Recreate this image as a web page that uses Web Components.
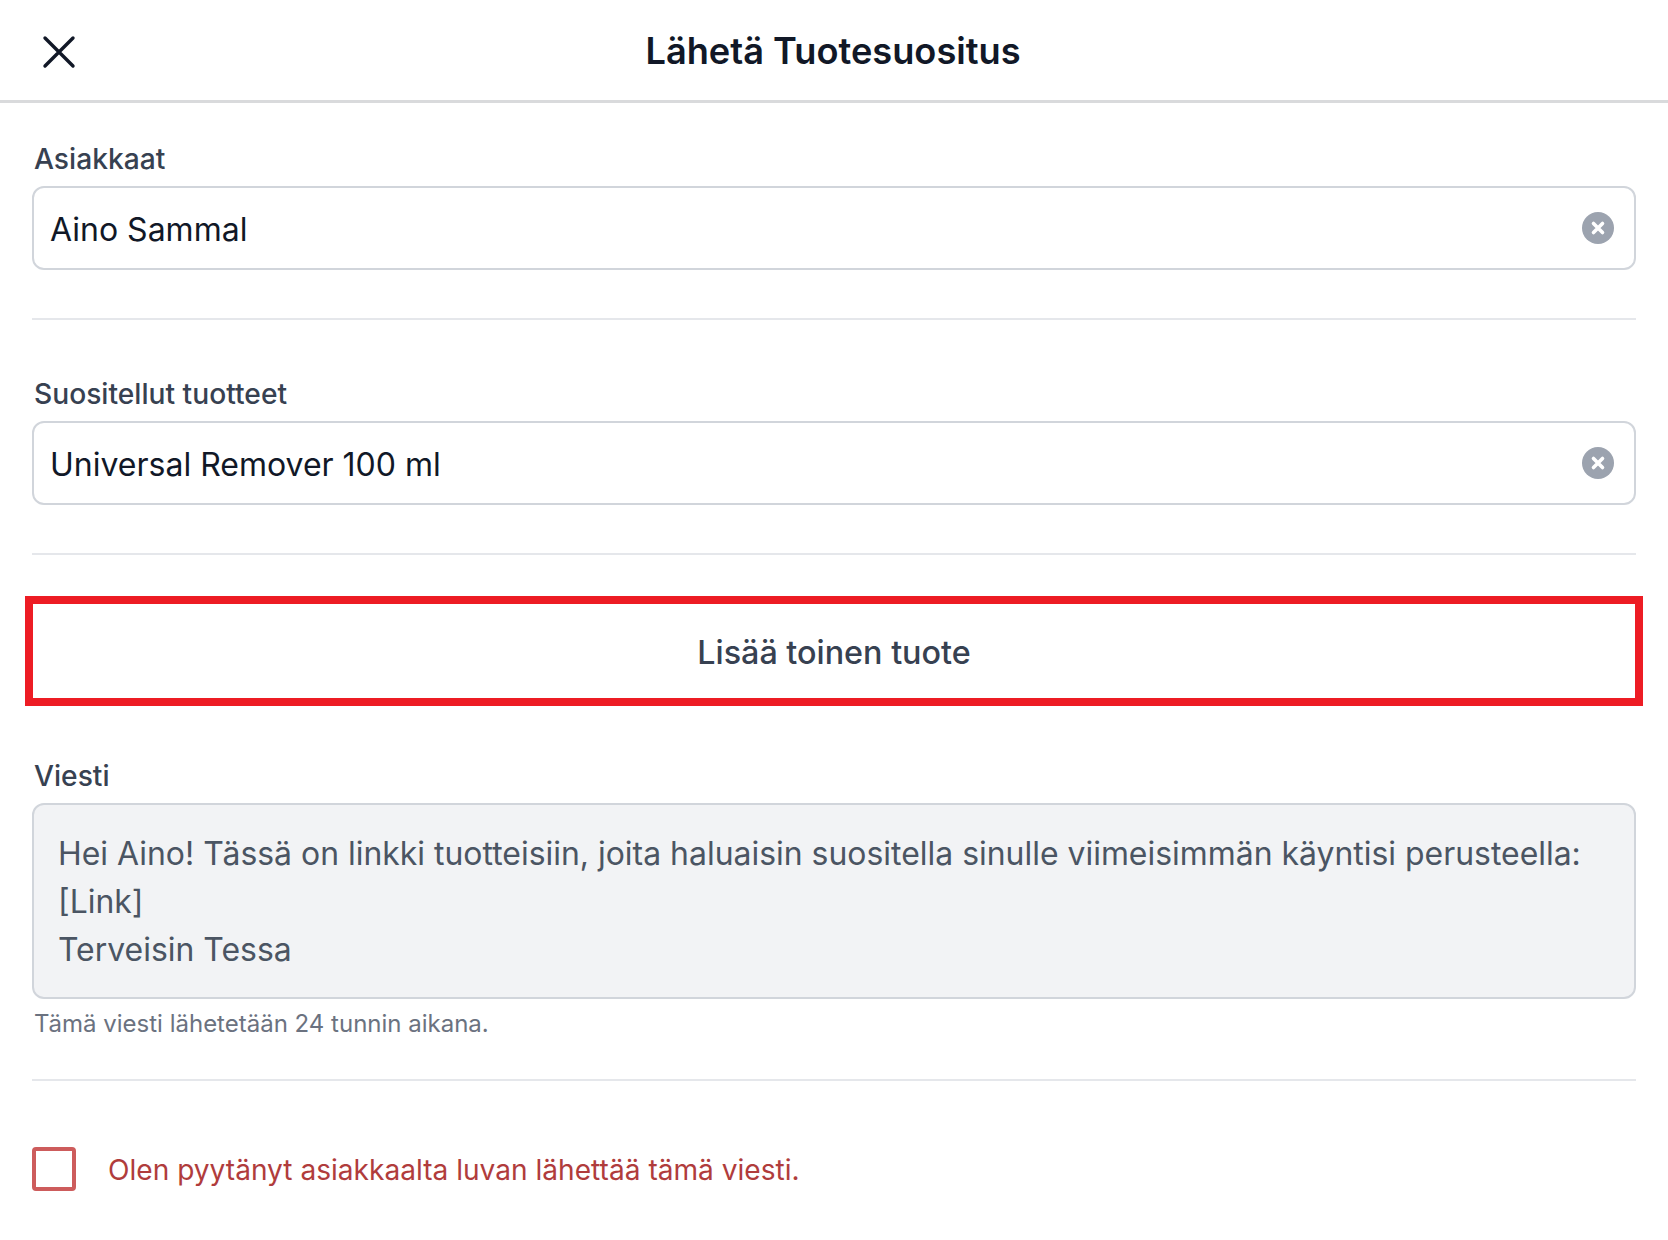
<!DOCTYPE html>
<html lang="fi">
<head>
<meta charset="utf-8">
<title>Lähetä Tuotesuositus</title>
<style>
  html, body { margin: 0; background: #fff; }
  body { font-family: Inter, "Liberation Sans", sans-serif; }
</style>
</head>
<body>
<recommend-form>
  <modal-header slot="header">Lähetä Tuotesuositus</modal-header>
  <form-field label="Asiakkaat">Aino Sammal</form-field>
  <form-field spaced label="Suositellut tuotteet">Universal Remover 100 ml</form-field>
  <add-button>Lisää toinen tuote</add-button>
  <message-field label="Viesti" hint="Tämä viesti lähetetään 24 tunnin aikana.">
    Hei Aino! Tässä on linkki tuotteisiin, joita haluaisin suositella sinulle viimeisimmän käyntisi perusteella:<br>[Link]<br>Terveisin Tessa
  </message-field>
  <consent-check>Olen pyytänyt asiakkaalta luvan lähettää tämä viesti.</consent-check>
</recommend-form>

<script>
customElements.define("recommend-form", class extends HTMLElement {
  connectedCallback() {
    this.attachShadow({mode: 'open'});
    this.shadowRoot.innerHTML = `
      <style>
        :host { display: block; height: 1240px; overflow: hidden; background: #fff; }
        .body { display: flex; flex-direction: column; padding: 0 32px; }
      </style>
      <slot name="header"></slot>
      <div class="body"><slot></slot></div>
    `;
  }
});

customElements.define("modal-header", class extends HTMLElement {
  connectedCallback() {
    this.attachShadow({mode: 'open'});
    this.shadowRoot.innerHTML = `
      <style>
        :host { display: block; }
        .bar {
          display: flex; align-items: center; justify-content: center;
          position: relative;
          height: 100px; border-bottom: 3px solid #d9dadc;
        }
        .title { font-size: 36.2px; font-weight: 600; color: #111827; margin-top: 2px; margin-right: 2px; }
        svg { position: absolute; left: 42px; top: 35px; width: 34px; height: 34px; }
      </style>
      <div class="bar">
        <svg viewBox="0 0 34 34" fill="none" stroke="#111827" stroke-width="3.4" stroke-linecap="round">
          <path d="M3 3 L31 31 M31 3 L3 31"/>
        </svg>
        <span class="title"><slot></slot></span>
      </div>
    `;
  }
});

customElements.define("form-field", class extends HTMLElement {
  connectedCallback() {
    this.attachShadow({mode: 'open'});
    this.shadowRoot.innerHTML = `
      <style>
        :host { display: block; padding-top: 39px; border-bottom: 2px solid #e5e7eb; padding-bottom: 48px; }
        :host([spaced]) { padding-top: 57px; }
        label { display: block; padding-left: 2px; font-size: 28.2px; line-height: 34px; font-weight: 500; color: #374151; margin-bottom: 10px; }
        .box {
          display: flex; align-items: center; justify-content: space-between;
          height: 80px; padding: 0 20px 0 16px;
          border: 2px solid #d1d5db; border-radius: 12px;
          font-size: 32px; color: #111827;
        }
        .value { margin-top: 3px; }
        svg { width: 32px; height: 32px; margin-top: -1px; }
      </style>
      <label></label>
      <div class="box">
        <span class="value"><slot></slot></span>
        <svg viewBox="0 0 32 32">
          <circle cx="16" cy="16" r="16" fill="#9ca3af"/>
          <path d="M11.5 11.5 L20.5 20.5 M20.5 11.5 L11.5 20.5" stroke="#fff" stroke-width="3.6" stroke-linecap="round"/>
        </svg>
      </div>
    `;
    this.shadowRoot.querySelector("label").textContent = this.getAttribute("label");
  }
});

customElements.define("add-button", class extends HTMLElement {
  connectedCallback() {
    this.attachShadow({mode: 'open'});
    this.shadowRoot.innerHTML = `
      <style>
        :host {
          display: flex; align-items: center; justify-content: center;
          margin: 41px -7px 0; height: 94px;
          border: 8px solid #ed1c24;
          font-size: 32.3px; font-weight: 500; color: #374151;
        }
        .text { margin-top: 2px; }
      </style>
      <span class="text"><slot></slot></span>
    `;
  }
});

customElements.define("message-field", class extends HTMLElement {
  connectedCallback() {
    this.attachShadow({mode: 'open'});
    this.shadowRoot.innerHTML = `
      <style>
        :host { display: block; padding-top: 53px; padding-bottom: 38px; border-bottom: 2px solid #e5e7eb; }
        label { display: block; padding-left: 2px; font-size: 28.2px; line-height: 34px; font-weight: 500; color: #374151; margin-bottom: 10px; }
        .box {
          box-sizing: border-box; height: 196px; padding: 25px 24px 0;
          background: #f2f3f5; border: 2px solid #d1d5db; border-radius: 12px;
          font-size: 31.93px; line-height: 48px; color: #4b5563;
        }
        .hint { padding-left: 2px; margin-top: 8px; font-size: 24px; line-height: 34px; color: #6b7280; }
      </style>
      <label></label>
      <div class="box"><slot></slot></div>
      <div class="hint"></div>
    `;
    this.shadowRoot.querySelector("label").textContent = this.getAttribute("label");
    this.shadowRoot.querySelector(".hint").textContent = this.getAttribute("hint");
  }
});

customElements.define("consent-check", class extends HTMLElement {
  connectedCallback() {
    this.attachShadow({mode: 'open'});
    this.shadowRoot.innerHTML = `
      <style>
        :host { display: flex; align-items: center; gap: 32px; margin-top: 66px; }
        .check { box-sizing: border-box; width: 44px; height: 44px; border: 4px solid #cd5c5c; border-radius: 4px; }
        .text { font-size: 28.1px; color: #b03c3c; margin-top: 2px; }
      </style>
      <div class="check"></div>
      <span class="text"><slot></slot></span>
    `;
  }
});
</script>
</body>
</html>
